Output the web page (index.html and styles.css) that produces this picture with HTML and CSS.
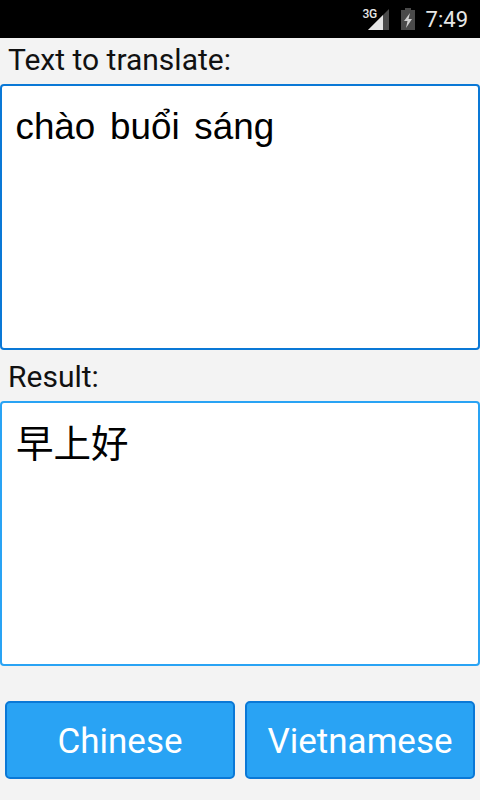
FILE: index.html
```html
<!DOCTYPE html>
<html lang="en">
<head>
  <meta charset="UTF-8">
  <meta name="viewport" content="width=device-width, initial-scale=1.0">
  <title>Translator</title>
  <link rel="stylesheet" href="styles.css">
</head>
<body>
  <!-- Status bar -->
  <div class="status-bar">
    <div class="signal">
      <span class="signal-label">3G</span>
      <svg width="21" height="21" viewBox="0 0 21 21">
        <polygon points="0,21 21,0 21,21" fill="#4a4a4a"/>
        <polygon points="0,21 15,6 15,21" fill="#e6e6e6"/>
      </svg>
    </div>
    <svg class="battery" width="14" height="22" viewBox="0 0 14 22">
      <rect x="4" y="0" width="6" height="2" fill="#4a4a4a"/>
      <rect x="0" y="2" width="14" height="20" fill="#4a4a4a"/>
      <polygon points="9,5 3,13 6.5,13 5,20 11,11 7.5,11" fill="#d0d0d0"/>
    </svg>
    <span class="clock">7:49</span>
  </div>

  <div class="content">
    <label class="field-label">Text to translate:</label>
    <div class="text-box source-box">chào buổi sáng</div>

    <label class="field-label result-label">Result:</label>
    <div class="text-box result-box">早上好</div>

    <div class="buttons">
      <button class="lang-button">Chinese</button>
      <button class="lang-button">Vietnamese</button>
    </div>
  </div>
</body>
</html>
```

FILE: styles.css
```css
/* General Styles */
html, body {
  height: 100%;
}

body {
  margin: 0;
  background-color: #f3f3f3;
  font-family: Roboto, "Noto Sans CJK SC", sans-serif;
  color: #111;
  overflow: hidden;
}

/* Status bar */
.status-bar {
  height: 38px;
  background-color: #000;
  display: flex;
  justify-content: flex-end;
  align-items: center;
  padding-right: 12px;
  box-sizing: border-box;
}

.signal {
  display: flex;
  align-items: flex-end;
  height: 21px;
  position: relative;
}

.signal-label {
  position: absolute;
  left: -5px;
  top: -1px;
  font-size: 12px;
  font-weight: 500;
  line-height: 12px;
  letter-spacing: -0.5px;
  color: #e6e6e6;
}

.battery {
  margin-left: 12px;
}

.clock {
  margin-left: 11px;
  font-size: 22px;
  color: #e6e6e6;
}

/* Main area */
.field-label {
  display: block;
  height: 46px;
  line-height: 44px;
  padding-left: 8px;
  font-size: 30px;
  box-sizing: border-box;
}

.result-label {
  height: 51px;
  line-height: 54px;
}

.text-box {
  box-sizing: border-box;
  background-color: #fff;
  border: 2px solid;
  border-radius: 4px;
  line-height: 48px;
  color: #000;
}

.source-box {
  height: 266px;
  padding: 17px 13.5px;
  border-color: #0a78d6;
  font-family: "Liberation Sans", sans-serif;
  font-size: 36.8px;
  word-spacing: 4.5px;
}

.result-box {
  height: 265px;
  padding: 14px 14px;
  border-color: #29a3f4;
  font-family: "Noto Sans CJK SC", sans-serif;
  font-size: 37.5px;
}

.buttons {
  display: flex;
  gap: 10px;
  padding: 35px 5px 0;
}

.lang-button {
  flex: 1;
  height: 78px;
  background-color: #29a3f4;
  border: 2px solid #0a78d6;
  border-radius: 5px;
  color: #fff;
  font-family: Roboto, sans-serif;
  font-size: 35px;
  padding: 2px 0 0;
}
```
